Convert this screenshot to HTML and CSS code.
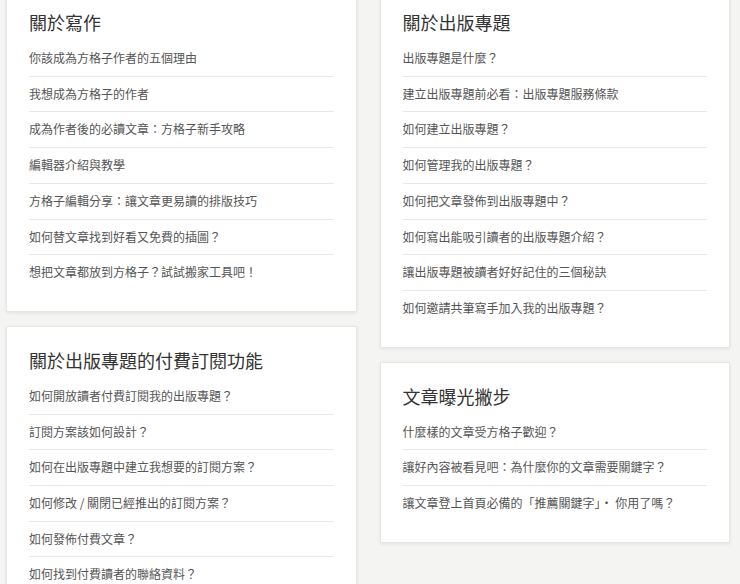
FILE: index.html
```html
<!DOCTYPE html>
<html lang="zh-Hant">
<head>
  <meta charset="UTF-8">
  <meta name="viewport" content="width=device-width, initial-scale=1.0">
  <title>方格子 說明中心</title>
  <link rel="stylesheet" href="styles.css">
</head>
<body>
  <div class="help-grid">
    <div class="help-col">
      <div class="help-card">
        <h2 class="help-title">關於寫作</h2>
        <ul class="help-list">
          <li><a href="#">你該成為方格子作者的五個理由</a></li>
          <li><a href="#">我想成為方格子的作者</a></li>
          <li><a href="#">成為作者後的必讀文章：方格子新手攻略</a></li>
          <li><a href="#">編輯器介紹與教學</a></li>
          <li><a href="#">方格子編輯分享：讓文章更易讀的排版技巧</a></li>
          <li><a href="#">如何替文章找到好看又免費的插圖？</a></li>
          <li><a href="#">想把文章都放到方格子？試試搬家工具吧！</a></li>
        </ul>
      </div>
      <div class="help-card">
        <h2 class="help-title">關於出版專題的付費訂閱功能</h2>
        <ul class="help-list">
          <li><a href="#">如何開放讀者付費訂閱我的出版專題？</a></li>
          <li><a href="#">訂閱方案該如何設計？</a></li>
          <li><a href="#">如何在出版專題中建立我想要的訂閱方案？</a></li>
          <li><a href="#">如何修改 / 關閉已經推出的訂閱方案？</a></li>
          <li><a href="#">如何發佈付費文章？</a></li>
          <li><a href="#">如何找到付費讀者的聯絡資料？</a></li>
        </ul>
      </div>
    </div>
    <div class="help-col">
      <div class="help-card">
        <h2 class="help-title">關於出版專題</h2>
        <ul class="help-list">
          <li><a href="#">出版專題是什麼？</a></li>
          <li><a href="#">建立出版專題前必看：出版專題服務條款</a></li>
          <li><a href="#">如何建立出版專題？</a></li>
          <li><a href="#">如何管理我的出版專題？</a></li>
          <li><a href="#">如何把文章發佈到出版專題中？</a></li>
          <li><a href="#">如何寫出能吸引讀者的出版專題介紹？</a></li>
          <li><a href="#">讓出版專題被讀者好好記住的三個秘訣</a></li>
          <li><a href="#">如何邀請共筆寫手加入我的出版專題？</a></li>
        </ul>
      </div>
      <div class="help-card">
        <h2 class="help-title">文章曝光撇步</h2>
        <ul class="help-list">
          <li><a href="#">什麼樣的文章受方格子歡迎？</a></li>
          <li><a href="#">讓好內容被看見吧：為什麼你的文章需要關鍵字？</a></li>
          <li><a href="#">讓文章登上首頁必備的「推薦關鍵字」・ 你用了嗎？</a></li>
        </ul>
      </div>
    </div>
  </div>
</body>
</html>
```
FILE: styles.css
```css
body {
  margin: 0;
  background: #f4f4f2;
  font-family: "Noto Sans CJK TC", "Noto Sans", sans-serif;
  color: #333;
}
.help-grid {
  display: grid;
  grid-template-columns: 1fr 1fr;
  column-gap: 23px;
  align-items: start;
  margin-top: -12px;
  padding: 0 10px 0 6px;
}
.help-col {
  display: flex;
  flex-direction: column;
  gap: 14px;
}
.help-card {
  background: #fff;
  border: 1px solid #e6e6e4;
  box-shadow: 0 1px 3px rgba(0,0,0,0.08);
  padding: 20px 22px 21px 22px;
}
.help-title {
  margin: 0 0 6px;
  font-size: 18px;
  line-height: 26px;
  font-weight: 400;
  color: #333;
}
.help-list {
  list-style: none;
  margin: 0;
  padding: 0;
}
.help-list li {
  border-bottom: 1px solid #e8e8e8;
  padding: 8px 0;
  font-size: 12px;
  line-height: 18.7px;
}
.help-list li:last-child {
  border-bottom: none;
}
.help-list a {
  color: #555;
  text-decoration: none;
}
```
